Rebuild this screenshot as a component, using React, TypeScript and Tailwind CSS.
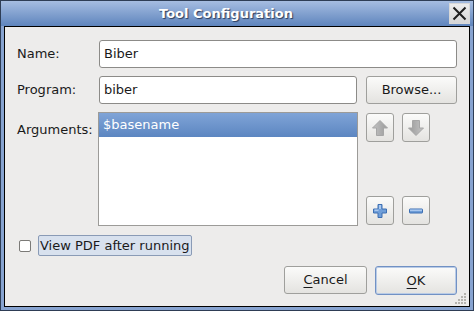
import React from 'react';

const font = { fontFamily: '"DejaVu Sans", Verdana, sans-serif' };

const Arrow = ({ down }: { down?: boolean }) => (
    <svg width="18" height="18" viewBox="0 0 18 18" className={down ? 'rotate-180' : ''}>
        <defs>
            <linearGradient id="ag" x1="0" y1="0" x2="1" y2="0">
                <stop offset="0" stopColor="#c4c4c4" />
                <stop offset="1" stopColor="#9a9a9a" />
            </linearGradient>
        </defs>
        <path d="M9 1.5 L16.5 9 L12.5 9 L12.5 16.5 L5.5 16.5 L5.5 9 L1.5 9 Z" fill="url(#ag)" stroke="#a6a6a6" strokeWidth="1" strokeLinejoin="round" />
    </svg>
);

const Plus = () => (
    <svg width="18" height="18" viewBox="0 0 18 18">
        <path d="M7 2.5h4v4.5h4.5v4h-4.5v4.5h-4v-4.5h-4.5v-4h4.5z" fill="#6f9ed8" stroke="#3d6fb2" strokeWidth="1" strokeLinejoin="round" />
        <path d="M7.5 7.5h-4v1.5h4zM8 3h2v4h-2z" fill="#a9c8ef" />
    </svg>
);

const Minus = () => (
    <svg width="18" height="18" viewBox="0 0 18 18">
        <rect x="2.5" y="7" width="13" height="4" rx="0.5" fill="#6f9ed8" stroke="#3d6fb2" strokeWidth="1" />
        <rect x="3" y="7.5" width="12" height="1.5" fill="#a9c8ef" />
    </svg>
);

const Btn = ({ children, className = '' }: { children: React.ReactNode; className?: string }) => (
    <div className={`flex items-center justify-center rounded-[3px] border border-[#9f9f9c] bg-gradient-to-b from-[#fbfbfa] to-[#e4e3e0] text-[13px] text-[#1a1a1a] ${className}`}>
        {children}
    </div>
);

export default function App() {
    return (
        <div style={font} className="w-[474px] h-[311px] border border-[#2e3d55] bg-[#87a3d0] flex flex-col select-none">
            {/* Title bar */}
            <div className="h-[25px] flex items-center bg-gradient-to-b from-[#a6bde1] to-[#5f85bd]">
                <div className="flex-1 text-center text-white font-bold text-[13px] [text-shadow:1px_1px_1px_#2a3c5c] pl-[2px] pt-[1px]">
                    Tool Configuration
                </div>
                <div className="w-[21px] h-[21px] mr-[3px] mt-[2px] self-start flex items-center justify-center border border-[#d8d8d8] bg-gradient-to-b from-[#ededed] to-[#d6d6d6]">
                    <svg width="15" height="15" viewBox="0 0 15 15">
                        <path d="M1.5 1.5 L13.5 13.5 M13.5 1.5 L1.5 13.5" stroke="#1e1e1e" strokeWidth="2" />
                    </svg>
                </div>
            </div>

            {/* Body */}
            <div className="mx-[3px] mb-[3px] flex-1 border border-black bg-[#edeceb] px-[12px] pt-[13px] flex flex-col relative text-[13px] text-[#1a1a1a]">
                <div className="flex items-center h-[28px]">
                    <div className="w-[82px]">Name:</div>
                    <div className="flex-1 h-[28px] rounded-[3px] border border-[#8c8b88] bg-white flex items-center pl-[4px]">Biber</div>
                </div>

                <div className="flex items-center h-[28px] mt-[8px]">
                    <div className="w-[82px]">Program:</div>
                    <div className="w-[258px] h-[28px] rounded-[3px] border border-[#8c8b88] bg-white flex items-center pl-[4px]">biber</div>
                    <Btn className="ml-[9px] w-[91px] h-[28px]">Browse...</Btn>
                </div>

                <div className="flex mt-[8px]">
                    <div className="w-[81px] pt-[8px]">Arguments:</div>
                    <div className="w-[260px] h-[114px] border border-[#9c9b98] bg-white">
                        <div className="h-[24px] flex items-center pl-[4px] text-white bg-gradient-to-b from-[#80a4d7] to-[#5c86c1]">$basename</div>
                    </div>
                    <div className="ml-[8px] flex flex-col justify-between h-[113px] pt-[1px]">
                        <div className="flex gap-[8px]">
                            <Btn className="w-[28px] h-[29px]"><Arrow /></Btn>
                            <Btn className="w-[28px] h-[29px]"><Arrow down /></Btn>
                        </div>
                        <div className="flex gap-[8px]">
                            <Btn className="w-[28px] h-[29px]"><Plus /></Btn>
                            <Btn className="w-[28px] h-[29px]"><Minus /></Btn>
                        </div>
                    </div>
                </div>

                <div className="flex items-center mt-[9px] h-[21px]">
                    <div className="ml-[2px] w-[12px] h-[12px] rounded-[2px] border border-[#7b7a77] bg-white" />
                    <div className="ml-[7px] h-[21px] px-[1px] flex items-center rounded-[2px] border border-[#8a9bb6] bg-[#d8e1ee]">View PDF after running</div>
                </div>

                <div className="flex justify-end gap-[8px] mt-[10px]">
                    <Btn className="w-[83px] h-[28px]"><span><span className="underline underline-offset-[3px]">C</span>ancel</span></Btn>
                    <Btn className="w-[82px] h-[29px] border-[#7191c4] shadow-[inset_0_0_0_1px_#b9cbe6]"><span><span className="underline underline-offset-[3px]">O</span>K</span></Btn>
                </div>

                {/* resize grip */}
                <svg className="absolute right-[2px] bottom-[2px]" width="12" height="12" viewBox="0 0 12 12">
                    {[[10, 2], [10, 5], [7, 5], [10, 8], [7, 8], [4, 8], [10, 11], [7, 11], [4, 11], [1, 11]].map(([x, y], i) => (
                        <rect key={i} x={x - 1} y={y - 1} width="2" height="2" fill="#b5b3ae" />
                    ))}
                </svg>
            </div>
        </div>
    );
}
